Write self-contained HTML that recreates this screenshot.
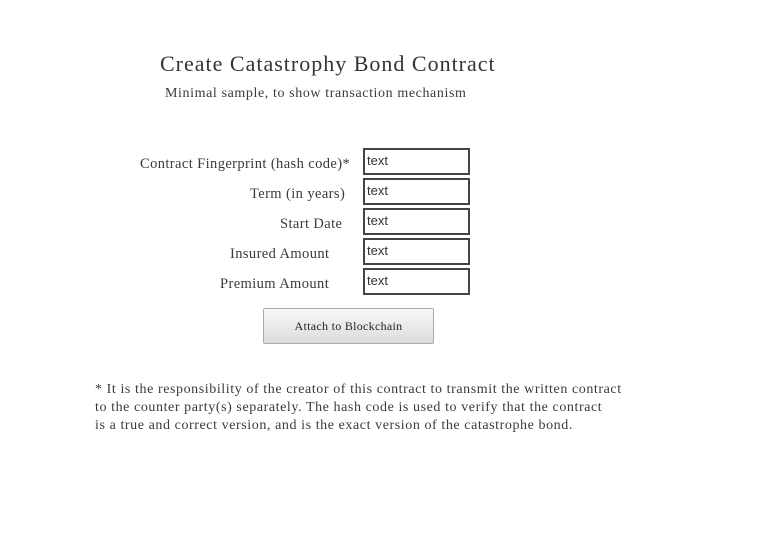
<!DOCTYPE html>
<html><head><style>
body{margin:0;width:774px;height:540px;background:#fff;font-family:"Liberation Serif",serif;color:#3a3a3a;position:relative;overflow:hidden}
.a{position:absolute;white-space:nowrap}
.in{position:absolute;left:363px;height:23px;border:2px solid #444;font-family:"Liberation Sans",sans-serif;font-size:13px;color:#333;padding-left:2px;line-height:21px;box-sizing:content-box;width:101px}
.l{font-size:14.5px;letter-spacing:0.4px}
</style></head><body>
<div class="a" style="left:160px;top:51px;font-size:22px;color:#333;letter-spacing:1px">Create Catastrophy Bond Contract</div>
<div class="a" style="left:165px;top:86px;font-size:14px;letter-spacing:0.6px">Minimal sample, to show transaction mechanism</div>
<div class="a l" style="left:140px;top:156px">Contract Fingerprint (hash code)*</div>
<div class="a l" style="left:250px;top:186px">Term (in years)</div>
<div class="a l" style="left:280px;top:216px">Start Date</div>
<div class="a l" style="left:230px;top:246px">Insured Amount</div>
<div class="a l" style="left:220px;top:276px">Premium Amount</div>
<div class="in" style="top:148px">text</div>
<div class="in" style="top:178px">text</div>
<div class="in" style="top:208px">text</div>
<div class="in" style="top:238px">text</div>
<div class="in" style="top:268px">text</div>
<div class="a" style="left:263px;top:308px;width:169px;height:34px;border:1px solid #aaa;border-radius:2px;background:linear-gradient(#f8f8f8,#dcdcdc);font-size:12px;color:#222;text-align:center;line-height:34px;letter-spacing:0.3px">Attach to Blockchain</div>
<div class="a" style="left:95px;top:381px;font-size:14px;line-height:18px;letter-spacing:0.58px">* It is the responsibility of the creator of this contract to transmit the written contract<br>to the counter party(s) separately. The hash code is used to verify that the contract<br>is a true and correct version, and is the exact version of the catastrophe bond.</div>
</body></html>
